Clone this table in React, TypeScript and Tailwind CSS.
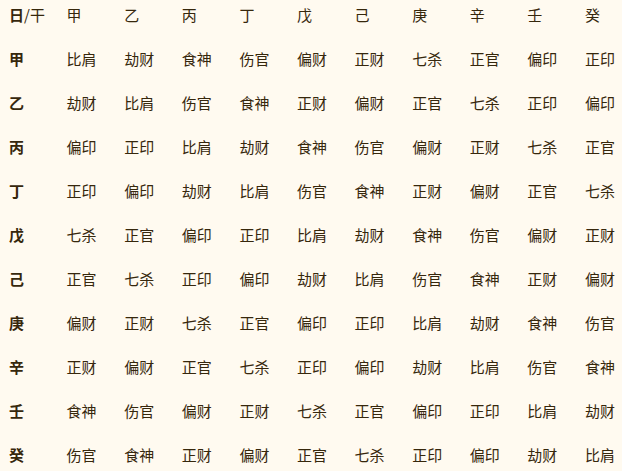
const stems = ['甲', '乙', '丙', '丁', '戊', '己', '庚', '辛', '壬', '癸']

const rows: string[][] = [
  ['比肩', '劫财', '食神', '伤官', '偏财', '正财', '七杀', '正官', '偏印', '正印'],
  ['劫财', '比肩', '伤官', '食神', '正财', '偏财', '正官', '七杀', '正印', '偏印'],
  ['偏印', '正印', '比肩', '劫财', '食神', '伤官', '偏财', '正财', '七杀', '正官'],
  ['正印', '偏印', '劫财', '比肩', '伤官', '食神', '正财', '偏财', '正官', '七杀'],
  ['七杀', '正官', '偏印', '正印', '比肩', '劫财', '食神', '伤官', '偏财', '正财'],
  ['正官', '七杀', '正印', '偏印', '劫财', '比肩', '伤官', '食神', '正财', '偏财'],
  ['偏财', '正财', '七杀', '正官', '偏印', '正印', '比肩', '劫财', '食神', '伤官'],
  ['正财', '偏财', '正官', '七杀', '正印', '偏印', '劫财', '比肩', '伤官', '食神'],
  ['食神', '伤官', '偏财', '正财', '七杀', '正官', '偏印', '正印', '比肩', '劫财'],
  ['伤官', '食神', '正财', '偏财', '正官', '七杀', '正印', '偏印', '劫财', '比肩'],
]

const cell = 'h-[44px] pl-[9px] pt-[6px] leading-[18px] whitespace-nowrap'

export default function App() {
  return (
    <div
      className="w-screen h-screen overflow-hidden bg-[#fffaf0] text-[#36270c] text-[15px]"
      style={{ fontFamily: '"Noto Sans CJK SC", "Noto Sans", sans-serif' }}
    >
      <div className="grid grid-cols-[repeat(11,57.6px)]">
        {/* header */}
        <div className={cell}>
          <span className="font-bold">日</span>/干
        </div>
        {stems.map(s => (
          <div key={s} className={cell}>{s}</div>
        ))}

        {rows.map((row, i) => (
          <>
            <div key={`h${i}`} className={`${cell} font-bold`}>{stems[i]}</div>
            {row.map((v, j) => (
              <div key={`${i}-${j}`} className={cell}>{v}</div>
            ))}
          </>
        ))}
      </div>
    </div>
  )
}
